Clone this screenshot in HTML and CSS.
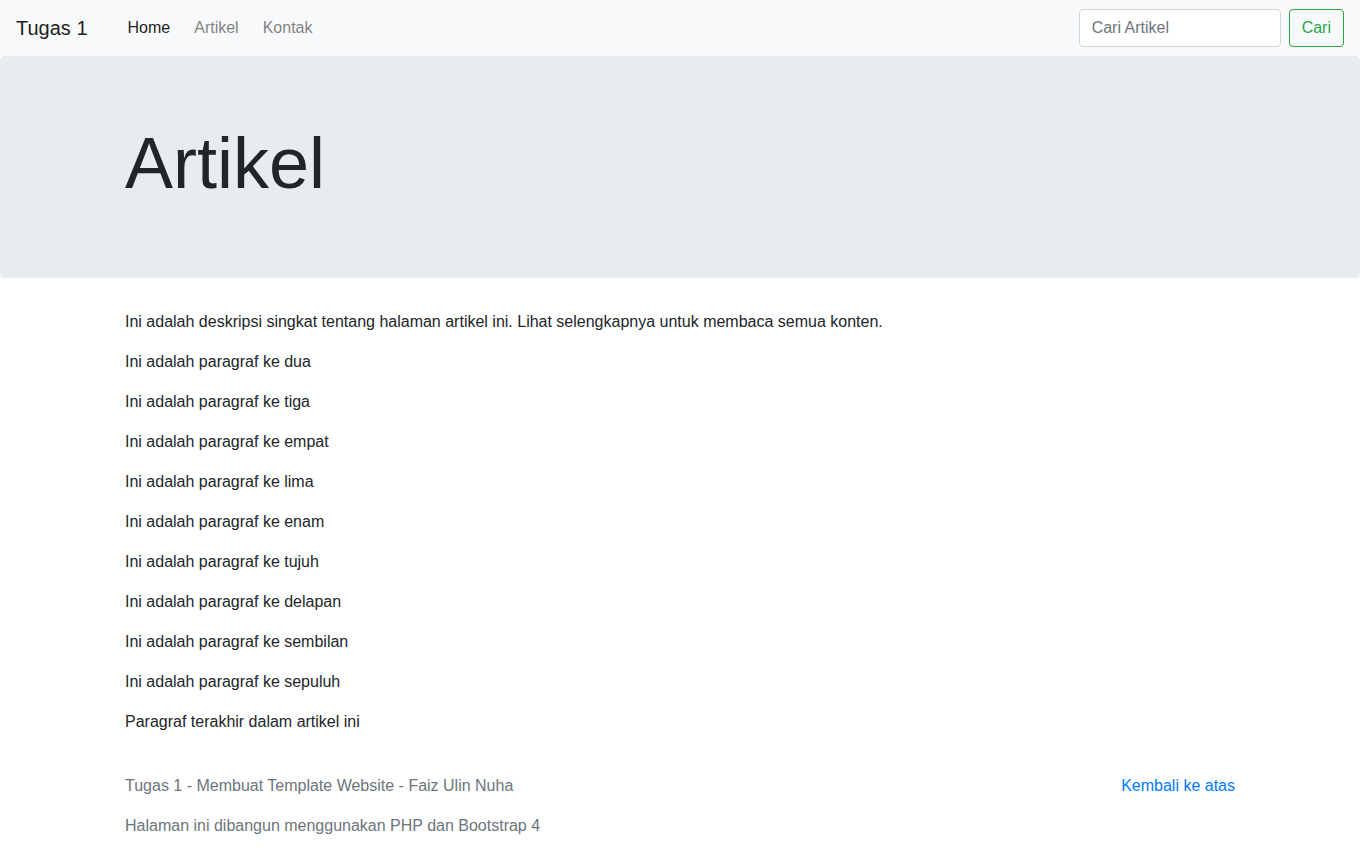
FILE: index.html
```html
<!DOCTYPE html>
<html lang="id">
<head>
<meta charset="utf-8">
<title>Tugas 1</title>
<link rel="stylesheet" href="styles.css">
</head>
<body>
<nav class="navbar">
  <a class="brand" href="#">Tugas 1</a>
  <ul class="nav-links">
    <li><a class="nav-link active" href="#">Home</a></li>
    <li><a class="nav-link" href="#">Artikel</a></li>
    <li><a class="nav-link" href="#">Kontak</a></li>
  </ul>
  <form class="search">
    <input class="search-input" type="search" placeholder="Cari Artikel">
    <button class="btn-cari" type="button">Cari</button>
  </form>
</nav>
<header class="jumbotron">
  <div class="container">
    <h1 class="display">Artikel</h1>
  </div>
</header>
<main class="container content">
  <p>Ini adalah deskripsi singkat tentang halaman artikel ini. Lihat selengkapnya untuk membaca semua konten.</p>
  <p>Ini adalah paragraf ke dua</p>
  <p>Ini adalah paragraf ke tiga</p>
  <p>Ini adalah paragraf ke empat</p>
  <p>Ini adalah paragraf ke lima</p>
  <p>Ini adalah paragraf ke enam</p>
  <p>Ini adalah paragraf ke tujuh</p>
  <p>Ini adalah paragraf ke delapan</p>
  <p>Ini adalah paragraf ke sembilan</p>
  <p>Ini adalah paragraf ke sepuluh</p>
  <p>Paragraf terakhir dalam artikel ini</p>
</main>
<footer class="container footer">
  <div class="footer-row">
    <p>Tugas 1 - Membuat Template Website - Faiz Ulin Nuha</p>
    <a class="back-top" href="#">Kembali ke atas</a>
  </div>
  <p>Halaman ini dibangun menggunakan PHP dan Bootstrap 4</p>
</footer>
</body>
</html>
```
FILE: styles.css
```css
* { box-sizing: border-box; }
html, body { margin: 0; padding: 0; }
body {
  font-family: "Liberation Sans", Arial, sans-serif;
  font-size: 16px;
  line-height: 1.5;
  color: #212529;
  background: #fff;
}
a { text-decoration: none; }

.navbar {
  display: flex;
  align-items: center;
  height: 56px;
  padding: 8px 16px;
  background: #f8f9fa;
}
.brand {
  font-size: 20px;
  line-height: 30px;
  color: rgba(0,0,0,.9);
  margin-right: 28px;
}
.nav-links {
  display: flex;
  list-style: none;
  margin: 0;
  padding: 0;
  flex: 1;
}
.nav-link {
  display: block;
  padding: 8px 12px;
  color: rgba(0,0,0,.5);
}
.nav-link.active { color: rgba(0,0,0,.9); }

.search { display: flex; align-items: center; gap: 8px; margin: 0; }
.search-input {
  width: 202px;
  height: 38px;
  padding: 6px 12px;
  font: inherit;
  color: #495057;
  background: #fff;
  border: 1px solid #ced4da;
  border-radius: 4px;
}
.search-input::placeholder { color: #6c757d; }
.btn-cari {
  height: 38px;
  padding: 6px 12px;
  font: inherit;
  color: #28a745;
  background: transparent;
  border: 1px solid #28a745;
  border-radius: 4px;
}

.jumbotron {
  background: #e9ecef;
  border-radius: 4px;
  padding: 64px 0;
  margin-bottom: 32px;
}
.container {
  width: 1140px;
  margin: 0 auto;
  padding: 0 15px;
}
.display {
  font-size: 72px;
  font-weight: 300;
  line-height: 1.2;
  margin: 0 0 8px;
}

.content p { margin: 0 0 16px; }

.footer {
  padding-top: 24px;
  color: #6c757d;
}
.footer p { margin: 0 0 16px; }
.footer-row {
  display: flex;
  justify-content: space-between;
  align-items: flex-start;
}
.back-top { color: #007bff; }
```
